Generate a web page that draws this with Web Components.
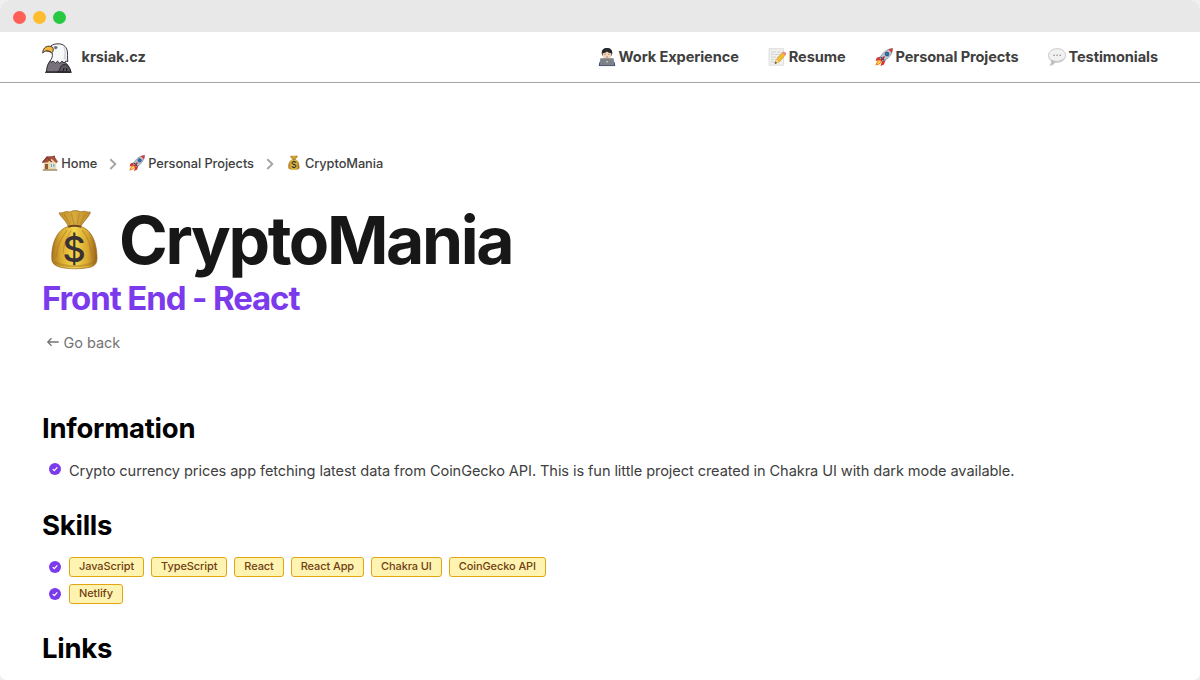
<!DOCTYPE html>
<html lang="en">
<head>
<meta charset="utf-8">
<title>CryptoMania</title>
<style>
html{background:#f0f0f0}
body{margin:0;font-family:Inter,"Liberation Sans",sans-serif;height:680px;overflow:hidden;color:#404040}
</style>
</head>
<body>
<portfolio-window></portfolio-window>
<script>
const define = (name, html, setup) => {
  const t = document.createElement('template');
  t.innerHTML = html;
  customElements.define(name, class extends HTMLElement {
    connectedCallback() {
      if (this.shadowRoot) return;
      this.attachShadow({mode: 'open'}).append(t.content.cloneNode(true));
      if (setup) setup(this, this.shadowRoot);
    }
  });
};

const art = {
  eagle: ['0 0 30 30', `
    <path d="M4.500 29C4.700 24 5.500 21 8.500 17.500l13.500 1c4 3 6 6.400 6.400 10.500z" fill="#77717a" stroke="#25232a" stroke-width="1"/>
    <path d="M8 18c2-2.500 2.800-4.500 2.200-8L7 5C9 2 12 .8 16 .8c6 0 9.300 3.700 9.500 9.200.1 4 0 6.500.3 8.500l-2-.5-1.500 1.800-2.400-1.500-2.100 2-2.300-2-2 1.700-2.300-1.800-1.900.8z" fill="#f7f8fa" stroke="#25232a" stroke-width=".9" stroke-linejoin="round"/>
    <path d="M22.500 4c1.800 2.500 1.500 9 2.200 13.300l-3.200-1C22.500 11 22.600 8 21 3z" fill="#d7dae0"/>
    <path d="M10.500 4.200C6 1.700 1 3.800 .7 10c1.700-2 3.500-2.300 5.600-1.900l3.300 1.700c1.700-.8 2.400-3.800.9-5.600z" fill="#f6b73c" stroke="#30272a" stroke-width=".9"/>
    <path d="M4 7.800l4.800.7" stroke="#30272a" stroke-width=".7"/>
    <path d="M11.800 3.800l4 .4" stroke="#55555d" stroke-width=".7"/><circle cx="13.700" cy="4.800" r="1.200" fill="#5f7890" stroke="#44444d" stroke-width=".4"/>
    <path d="M15.500 28.800c3.500-.8 1.500-5.300 5-6.800 4-1.500 7.500 1.700 8.300 7z" fill="#5d5862" stroke="#25232a" stroke-width="1"/>
    <path d="M20.500 28c1.300-.5 1.300-2 1.600-3.200M24.500 28c.5-1 .3-2 .1-3M3 29.200h26.700" fill="none" stroke="#18171b" stroke-width="1.100"/>`],
  worker: ['0 0 18 18', `
    <path d="M.8 18c0-5 2.700-7 8.200-7s8.200 2 8.200 7z" fill="#2c3ea0"/>
    <path d="M3.800 6C3.200 2 5.500.1 9 .1S14.800 2 14.200 6l-1 2H4.800z" fill="#29282b"/>
    <path d="M4.700 5.200c2-.3 3-.8 4.300-1.800 1.300 1 2.500 1.600 4.300 1.800.2 3.800-1.300 6.500-4.300 6.500S4.500 9 4.700 5.200z" fill="#f3d4b8"/>
    <path d="M6.200 6.300h1.500M10.300 6.300h1.500M8 9h2" stroke="#8b6f60" stroke-width=".7"/>
    <path d="M2.300 10.300h13.400l.6 7.200H1.700z" fill="#7d8188"/><circle cx="9" cy="13.800" r=".8" fill="#e6e6e6"/><path d="M2 17.600h14" stroke="#51565e" stroke-width=".7"/>`],
  memo: ['0 0 18 18', `
    <path d="M1 .6h14.500v16.700H1z" fill="#f0f0ef" stroke="#d0d0d0" stroke-width=".6"/>
    <path d="M3 4h5m1 0h4M3 6.500h3m1 0h5M3 9h5m1 0h2M3 11.500h3m1 0h2M3 14h4" stroke="#cbcbcd" stroke-width=".8"/>
    <path d="M6.800 15.800l1.700-4.600L14.800 4l3 2.400-6.500 7.600z" fill="#f4bd24" stroke="#b98028" stroke-width=".5"/>
    <path d="M14.100 4.900l1-1.100q1-.5 2.300.5t.5 2l-1 1.100z" fill="#ec8a91"/><path d="M6.800 15.800l1.700-4.600 2.800 2.800z" fill="#edd2a1"/><path d="M6.800 15.800l.8-2.200 1.300 1.300z" fill="#333"/>`],
  rocket: ['0 0 18 18', `
    <path d="M5.500 8.500l-3.800 1.200L.6 13l4-1 2.200 2-1.300 4 3.500-1.500L11 11z" fill="#d53330"/>
    <path d="M5.300 11.400C2.500 11.800 1 14 .4 17.600 4 17 6.500 15.800 6.900 13z" fill="#f4842a"/><path d="M5 12.700c-1.500.5-2.600 2-3 3.400 1.700-.3 3.200-1.100 3.700-2.600z" fill="#ffe349"/>
    <path d="M17.700.4C12 .8 7.400 4.500 4.700 10.200L8 13.400C13.600 10.600 17.200 6.300 17.700.4z" fill="#b6c8d6" stroke="#66798b" stroke-width=".6"/>
    <path d="M17.700.4l-4.500.9 3.600 3.600z" fill="#df3432"/><path d="M6 9.200l3 3" stroke="#293f59" stroke-width="1.300"/>
    <circle cx="12" cy="6" r="1.900" fill="#2c70b9" stroke="#34475d" stroke-width=".8"/><path d="M6 12.500l3.500-4" stroke="#bc2829" stroke-width="1.500"/>`],
  speech: ['0 0 18 18', `
    <path d="M9.200.7C4.300.7.6 3.500.6 7.500c0 2.500 1.200 4.200 3.100 5.400 0 1.900-.6 3.200-1.700 4.400 2.600-.3 4.300-1.500 5.300-3.200 5.900.8 10.200-2.400 10.200-6.700 0-4-3.500-6.700-8.300-6.700z" fill="#f1f1f1" stroke="#c2c2c2" stroke-width=".9"/>
    <path d="M1.500 10c1.800 3.400 11.500 4.500 15.300-.5-1.200 3-4.800 4.600-9.500 4.200C6 15.600 4.800 16.500 2 17.300c1.300-1.300 1.700-2.700 1.700-4.400C2.400 12 1.800 11 1.500 10z" fill="#bcbcbc"/>
    <g fill="#8b8b8b"><circle cx="6" cy="7.300" r=".8"/><circle cx="9.100" cy="7.300" r=".8"/><circle cx="12.200" cy="7.300" r=".8"/></g>`],
  home: ['0 0 18 18', `
    <path d="M12.600.8h2v4.500h-2z" fill="#a84735"/><path d="M2 8l7-6 7 5v9.500H2z" fill="#eed5a3"/>
    <path d="M.6 8.200L5.500 2l8-.5 4 6-1.300 1.200L11 4 6 8z" fill="#a84e3b" stroke="#723a2e" stroke-width=".6"/><path d="M.5 8.600L5.700 2.500 11 8" fill="none" stroke="#8a3a2c" stroke-width="1.400"/>
    <path d="M3.300 10h3.500v6H3.300z" fill="#905b38"/><path d="M9.500 9.500h5v4.500h-5z" fill="#6ca5be" stroke="#fff4d8" stroke-width=".8"/><path d="M12 9.500v4" stroke="#fff"/><path d="M.8 16.900h16.400" stroke="#a08c68" stroke-width="1.500"/>`],
  money: ['0 0 66 66', `
    <defs><linearGradient id="g"><stop stop-color="#a67421"/><stop offset=".2" stop-color="#d9a930"/><stop offset=".5" stop-color="#f4d64d"/><stop offset=".8" stop-color="#d7a62f"/><stop offset="1" stop-color="#946019"/></linearGradient></defs>
    <g transform="translate(.2 .3)"><path d="M17 4.500c4 1 5-2 9-1 3 1 4-2 7-1 3-1 4 2 8 .6 2.500-.8 4 1.500 7 .5.500 3-5.500 8-9.600 14.600C50 21 55 36 54.800 50c0 5.500-2.500 8-8 9.200-8 1.700-21 1.700-28.500-.2C12.500 57.500 9.500 55 9.600 50 9 35 15 21 26 18.200 24 12 17.500 8 17 4.500z" fill="url(#g)" stroke="#976c25" stroke-width=".7"/>
    <path d="M17 4.500c4 1 5-2 9-1 3 1 4-2 7-1 3-1 4 2 8 .6 2.500-.8 4 1.500 7 .5.500 3-5.500 8-9.600 14.600H26C24 12 17.500 8 17 4.500z" fill="#a86f25" opacity=".4"/>
    <path d="M22 6l6 10M29 5l3 11M37 5l-2 11M43 6l-5 10M25 22C18 30 15 39 14 49M29 22c-5 8-8 14-8 23M40 22c7 8 9 18 10 27" fill="none" stroke="#a26b20" stroke-width="1.300" opacity=".38"/>
    <path d="M26 18.500q6-2 13 0" fill="none" stroke="#6e4820" stroke-width="2"/>
    <path d="M12 54q20 8 41 0" fill="none" stroke="#9b6e20" stroke-width="2" opacity=".4"/></g>
    <text x="32.200" y="53.500" text-anchor="middle" font-family="Inter" font-size="36" font-weight="500" style="letter-spacing:0" fill="#393133">$</text>`],
  chevron: ['0 0 8 12', `<path d="M1.300 1.200l5 4.900-5 4.900" fill="none" stroke="#a3a3a3" stroke-width="1.900"/>`],
  check: ['0 0 12 12', `<circle cx="6" cy="6" r="6" fill="#7c3aed"/><path d="M3.700 6.100l1.600 1.500 3-3.200" fill="none" stroke="#fff" stroke-width="1.300"/>`],
  back: ['0 0 12 10', `<path d="M11.700 5H.9M4.500 1.300L.8 5l3.700 3.700" fill="none" stroke="#737373" stroke-width="1.300"/>`]
};

define('art-icon', `<style>:host{display:block;flex:none}svg{display:block;width:100%;height:100%;overflow:visible}</style>`, (el, root) => {
  const [box, body] = art[el.getAttribute('name')];
  root.innerHTML += `<svg viewBox="${box}" aria-hidden="true">${body}</svg>`;
});

define('window-bar', `<style>
:host{display:flex;height:32px;background:#e8e8e8;align-items:center;gap:7px;padding:2px 0 0 13.400px;box-sizing:border-box}
i{width:13px;height:13px;border-radius:50%;box-sizing:border-box;background:#ff5f57}
i:nth-of-type(2){background:#febc2e}i:nth-of-type(3){background:#28c840}
</style><i></i><i></i><i></i>`);

define('nav-link', `<style>
:host{display:flex;align-items:center;gap:2.800px;font-size:14.600px;font-weight:700;letter-spacing:-.1px;line-height:20px;white-space:nowrap}
</style><slot name="icon"></slot><slot></slot>`);

define('site-header', `<style>
:host{display:flex;height:51px;box-sizing:border-box;border-bottom:1px solid #a3a3a3;padding:0 42px 0 41.500px;align-items:center;justify-content:space-between}
.brand{display:flex;align-items:center;gap:10px;font-size:14.600px;font-weight:700;letter-spacing:-.08px}
.brand art-icon{width:30px;height:30px;margin-top:1px}
nav{display:flex;gap:29.200px}nav art-icon{width:18px;height:18px}
</style><div class="brand"><art-icon name="eagle"></art-icon><span>krsiak.cz</span></div>
<nav><nav-link><art-icon slot="icon" name="worker"></art-icon>Work Experience</nav-link><nav-link><art-icon slot="icon" name="memo"></art-icon>Resume</nav-link><nav-link><art-icon slot="icon" name="rocket"></art-icon>Personal Projects</nav-link><nav-link><art-icon slot="icon" name="speech"></art-icon>Testimonials</nav-link></nav>`);

define('bread-crumbs', `<style>
:host{display:flex;height:20px;align-items:center;font-size:12.800px;font-weight:500;line-height:20px;letter-spacing:-.06px}
span{margin-top:2px}
.p{width:16px;height:16px;margin-right:3.300px}.c{width:8px;height:12px;margin:1px 11.600px 0 12.100px}
</style><art-icon class="p" name="home"></art-icon><span>Home</span><art-icon class="c" name="chevron"></art-icon><art-icon class="p" name="rocket"></art-icon><span>Personal Projects</span><art-icon class="c" name="chevron"></art-icon><art-icon class="p" name="money"></art-icon><span>CryptoMania</span>`);

define('project-heading', `<style>
:host{display:block}
h1,h2{margin:0}
h1{display:flex;align-items:center;height:72px;font-size:66px;line-height:72px;font-weight:700;letter-spacing:-2.350px;color:#171717;gap:11px}
h1 span{margin-top:-2px}
h1 art-icon{width:66px;height:66px}
h2{font-size:33px;line-height:42px;font-weight:700;letter-spacing:-1.120px;color:#7c3aed}
a{display:flex;align-items:center;gap:4.500px;padding-left:5px;margin-top:14px;font-size:14.500px;line-height:20px;letter-spacing:-.04px;color:#737373}
a art-icon{width:12px;height:10px;margin-top:-2px}
</style><h1><art-icon name="money"></art-icon><span>CryptoMania</span></h1><h2>Front End - React</h2><a><art-icon name="back"></art-icon><span>Go back</span></a>`);

define('content-section', `<style>
:host{display:block}h3{margin:0;color:#000;font-size:27.500px;line-height:34px;font-weight:700;letter-spacing:-.25px}
</style><h3></h3><slot></slot>`, (el, root) => root.querySelector('h3').textContent = el.getAttribute('heading'));

define('check-row', `<style>
:host{display:flex;align-items:center;padding-left:7px;height:20px;gap:8px;font-size:14.600px;letter-spacing:-.091px;line-height:20px;white-space:nowrap}
art-icon{width:12px;height:12px;margin-top:var(--check-shift,.5px)}div{display:flex;gap:7px}
</style><art-icon name="check"></art-icon><div><slot></slot></div>`);

define('skill-tag', `<style>
:host{display:block;box-sizing:border-box;height:20px;border:1px solid #e2a610;border-radius:3px;background:#fef3b0;color:#713f12;padding:0 9px;font-size:11px;letter-spacing:-.1px;line-height:17px;font-weight:500;white-space:nowrap}
</style><slot></slot>`);

define('portfolio-window', `<style>
:host{display:block;width:1200px;height:680px;border-radius:10px 10px 7px 7px;overflow:hidden;background:#fff}
main{padding:70px 42px 0}
project-heading{margin-top:32px}
.info{margin-top:58px}.info check-row{margin-top:16px;--check-shift:-3.500px}
.skills{margin-top:27px}.skills check-row{margin-top:15px}.skills check-row + check-row{margin-top:7px}
.links{margin-top:27px}
</style><window-bar></window-bar><site-header></site-header><main>
<bread-crumbs></bread-crumbs><project-heading></project-heading>
<content-section class="info" heading="Information"><check-row>Crypto currency prices app fetching latest data from CoinGecko API. This is fun little project created in Chakra UI with dark mode available.</check-row></content-section>
<content-section class="skills" heading="Skills"><check-row><skill-tag>JavaScript</skill-tag><skill-tag>TypeScript</skill-tag><skill-tag>React</skill-tag><skill-tag>React App</skill-tag><skill-tag>Chakra UI</skill-tag><skill-tag>CoinGecko API</skill-tag></check-row><check-row><skill-tag>Netlify</skill-tag></check-row></content-section>
<content-section class="links" heading="Links"></content-section></main>`);
</script>
</body>
</html>
